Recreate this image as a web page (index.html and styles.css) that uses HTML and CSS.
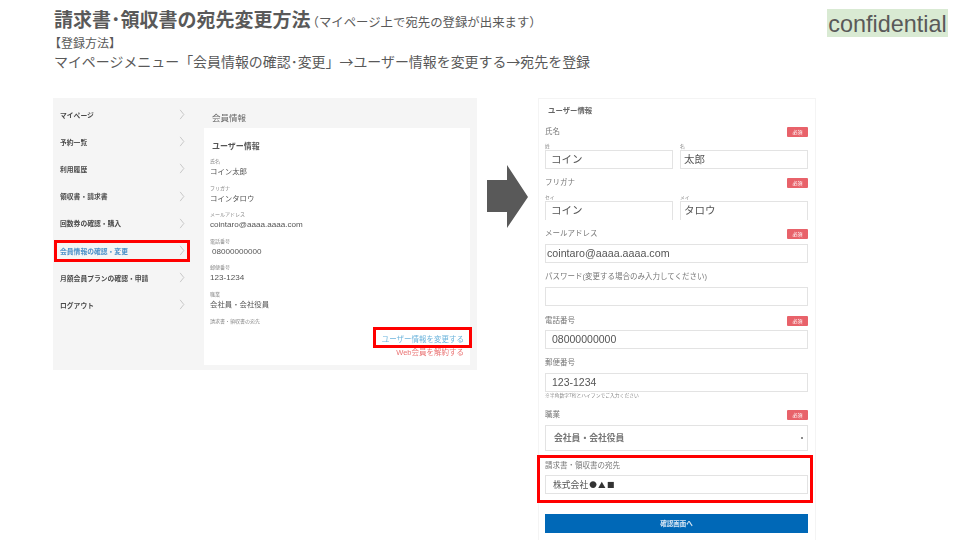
FILE: index.html
```html
<!DOCTYPE html>
<html lang="ja">
<head>
<meta charset="utf-8">
<title>請求書・領収書の宛先変更方法</title>
<link rel="stylesheet" href="styles.css">
</head>
<body>
<main class="slide">
  <header class="head">
    <h1 class="title">請求書･領収書の宛先変更方法<small class="sub">（マイページ上で宛先の登録が出来ます）</small></h1>
    <p class="line2">【登録方法】</p>
    <p class="line3">マイページメニュー「会員情報の確認･変更」→ユーザー情報を変更する→宛先を登録</p>
  </header>
  <div class="conf">confidential</div>

  <section class="shot-left">
    <div class="soft left-inner">
      <nav class="menu">
        <div class="mi"><span>マイページ</span><svg class="chev" viewBox="0 0 6 12"><path d="M1 1l4 5-4 5"/></svg></div>
        <div class="mi"><span>予約一覧</span><svg class="chev" viewBox="0 0 6 12"><path d="M1 1l4 5-4 5"/></svg></div>
        <div class="mi"><span>利用履歴</span><svg class="chev" viewBox="0 0 6 12"><path d="M1 1l4 5-4 5"/></svg></div>
        <div class="mi"><span>領収書・請求書</span><svg class="chev" viewBox="0 0 6 12"><path d="M1 1l4 5-4 5"/></svg></div>
        <div class="mi"><span>回数券の確認・購入</span><svg class="chev" viewBox="0 0 6 12"><path d="M1 1l4 5-4 5"/></svg></div>
        <div class="mi active"><span>会員情報の確認・変更</span><svg class="chev" viewBox="0 0 6 12"><path d="M1 1l4 5-4 5"/></svg></div>
        <div class="mi"><span>月額会員プランの確認・申請</span><svg class="chev" viewBox="0 0 6 12"><path d="M1 1l4 5-4 5"/></svg></div>
        <div class="mi"><span>ログアウト</span><svg class="chev" viewBox="0 0 6 12"><path d="M1 1l4 5-4 5"/></svg></div>
      </nav>
      <div class="content">
        <div class="content-title">会員情報</div>
        <div class="card">
          <div class="card-title">ユーザー情報</div>
          <dl class="info">
            <div class="row"><dt>氏名</dt><dd class="jp">コイン太郎</dd></div>
            <div class="row"><dt>フリガナ</dt><dd class="jp">コインタロウ</dd></div>
            <div class="row"><dt>メールアドレス</dt><dd>cointaro@aaaa.aaaa.com</dd></div>
            <div class="row"><dt>電話番号</dt><dd class="ind">08000000000</dd></div>
            <div class="row"><dt>郵便番号</dt><dd>123-1234</dd></div>
            <div class="row"><dt>職業</dt><dd class="jp">会社員・会社役員</dd></div>
            <div class="row"><dt>請求書・領収書の宛先</dt><dd></dd></div>
          </dl>
          <div class="links">
            <span class="l-blue">ユーザー情報を変更する</span>
            <span class="l-red">Web会員を解約する</span>
          </div>
        </div>
      </div>
    </div>
    <div class="mark mark-menu"></div>
    <div class="mark mark-link"></div>
  </section>

  <svg class="arrow" viewBox="0 0 42 64"><path d="M0 15H20V0L41 32 20 63V47H0Z"/></svg>

  <section class="shot-right">
    <div class="soft right-inner">
      <div class="form-title">ユーザー情報</div>

      <div class="fl g1"><span>氏名</span><b class="req">必須</b></div>
      <div class="two">
        <div class="col"><span class="mini">姓</span><div class="inp ind1">コイン</div></div>
        <div class="col"><span class="mini">名</span><div class="inp">太郎</div></div>
      </div>

      <div class="fl g2"><span>フリガナ</span><b class="req">必須</b></div>
      <div class="two">
        <div class="col"><span class="mini">セイ</span><div class="inp ind1 cut">コイン</div></div>
        <div class="col"><span class="mini">メイ</span><div class="inp cut">タロウ</div></div>
      </div>

      <div class="fl g3"><span>メールアドレス</span><b class="req">必須</b></div>
      <div class="inp mail">cointaro@aaaa.aaaa.com</div>

      <div class="fl g4"><span>パスワード(変更する場合のみ入力してください)</span></div>
      <div class="inp"></div>

      <div class="fl g5"><span>電話番号</span><b class="req">必須</b></div>
      <div class="inp ind2">08000000000</div>

      <div class="fl g6"><span>郵便番号</span></div>
      <div class="inp ind2">123-1234</div>
      <div class="note">※半角数字7桁とハイフンでご入力ください</div>

      <div class="fl g7"><span>職業</span><b class="req">必須</b></div>
      <div class="inp select"><span>会社員・会社役員</span><i class="dot"></i></div>

      <div class="fl g8"><span>請求書・領収書の宛先</span></div>
      <div class="inp dest">株式会社<span class="sym">●▲■</span></div>

      <div class="btn">確認画面へ</div>
    </div>
    <div class="mark mark-dest"></div>
  </section>
</main>
</body>
</html>
```
FILE: styles.css
```css
* { box-sizing: border-box; margin: 0; padding: 0; }
html, body { width: 960px; height: 540px; overflow: hidden; background: #fff; }
body { font-family: "Liberation Sans", "Noto Sans CJK JP", sans-serif; color: #595959; }

.slide { position: relative; width: 960px; height: 540px; overflow: hidden; }

.head { position: absolute; left: 54px; top: 9px; }
.title { font-size: 19px; line-height: 24px; font-weight: 700; color: #595959; white-space: nowrap; }
.sub { font-size: 12.4px; font-weight: 400; margin-left: -4px; }
.line2 { font-size: 12px; line-height: 18px; white-space: nowrap; margin-left: -5px; }
.line3 { font-family: "Noto Sans CJK JP", sans-serif; font-size: 13.95px; line-height: 17px; white-space: nowrap; }

.conf { position: absolute; left: 827px; top: 9px; width: 121px; height: 28px; background: #d9ead3; font-size: 23.4px; line-height: 30px; white-space: nowrap; color: #595959; text-align: center; }

.soft { filter: blur(0.45px); }

/* left screenshot */
.shot-left { position: absolute; left: 53px; top: 98px; width: 424px; height: 272px; }
.left-inner { display: flex; width: 100%; height: 100%; background: #f5f5f5; }
.menu { width: 151px; padding: 3px 0 0 7px; }
.mi { display: flex; align-items: center; justify-content: space-between; height: 27.2px; padding-right: 19px; font-size: 6.8px; font-weight: 700; color: #4a4a4a; }
.mi.active { color: #4a90c8; }
.chev { width: 6px; height: 11px; fill: none; stroke: #c4c4c4; stroke-width: 1; }

.content { flex: 1; display: flex; flex-direction: column; padding: 0 7px 5px 0; }
.content-title { height: 30px; padding: 14px 0 0 8px; font-size: 8.5px; line-height: 12px; color: #666; }
.card { flex: 1; background: #fff; padding: 14px 6px 0 6px; display: flex; flex-direction: column; }
.card-title { height: 16px; padding-left: 2px; font-size: 8px; line-height: 10px; font-weight: 700; color: #555; }
.info { display: block; }
.row { height: 26.6px; }
.row dt { font-size: 5px; line-height: 6px; color: #888; }
.row dd { font-size: 8.1px; line-height: 15px; color: #555; white-space: nowrap; }
.row dd.jp { font-size: 7.4px; }
.row dd.ind { padding-left: 2px; }
.links { display: flex; flex-direction: column; align-items: flex-end; margin-top: -11px; font-size: 7.5px; line-height: 13px; }
.l-blue { color: #6db4dc; }
.l-red { color: #ea7474; }

.mark { position: absolute; border: 3px solid #f00; }
.mark-menu { left: 1px; top: 142px; width: 136px; height: 22px; }
.mark-link { left: 320px; top: 229px; width: 99px; height: 21px; }
.mark-dest { left: -1px; top: 357px; width: 276px; height: 48px; }

.arrow { position: absolute; left: 487px; top: 165px; width: 42px; height: 64px; fill: #595959; }

/* right screenshot */
.shot-right { position: absolute; left: 538px; top: 98px; width: 278px; height: 442px; }
.right-inner { width: 100%; height: 100%; background: #fff; border: 1px solid #f4f4f4; border-bottom: 0; padding: 0 7px 0 6px; }
.form-title { height: 23px; padding: 6px 0 0 3px; font-size: 7.4px; line-height: 11px; font-weight: 700; color: #666; }
.fl { display: flex; justify-content: space-between; align-items: center; height: 11px; font-size: 7.5px; line-height: 11px; color: #777; }
.g1 { margin-top: 4px; margin-bottom: 6px; }
.g2 { margin-top: 8px; margin-bottom: 6px; }
.g3 { margin-top: 8px; margin-bottom: 5px; }
.g4 { margin-top: 8px; margin-bottom: 5px; }
.g5 { margin-top: 9px; margin-bottom: 4px; }
.g6 { margin-top: 8px; margin-bottom: 5px; }
.g7 { margin-top: 9px; margin-bottom: 5px; }
.g8 { margin-top: 9px; margin-bottom: 4px; }
.req { width: 21px; height: 10px; background: #e8626a; color: #fff; border-radius: 1px; font-size: 5px; line-height: 10px; font-weight: 400; text-align: center; }
.two { display: grid; grid-template-columns: 128px 128px; gap: 7px; }
.col { display: block; }
.mini { display: block; height: 7px; font-size: 4.8px; line-height: 7px; color: #888; }
.inp { height: 19px; border: 1px solid #e3e3e3; font-size: 10.5px; line-height: 17px; color: #555; padding-left: 3px; white-space: nowrap; }
.ind1 { padding-left: 5px; }
.ind2 { padding-left: 6px; }
.mail { padding-left: 1px; font-size: 10.7px; }
.cut { border-bottom: 0; }
.note { height: 8px; font-size: 4.8px; line-height: 8px; color: #888; }
.select { height: 26px; display: flex; align-items: center; justify-content: space-between; padding: 0 4px 0 8px; font-size: 8.8px; font-weight: 700; color: #777; }
.dot { width: 2px; height: 2px; background: #666; border-radius: 50%; }
.dest { padding-left: 7px; font-family: "Noto Sans CJK JP", sans-serif; font-size: 8.8px; line-height: 17px; }
.sym { font-size: 7.6px; letter-spacing: 1.3px; margin-left: 1px; color: #333; }
.btn { margin-top: 20px; height: 19px; background: #0068b7; color: #dce9f5; font-size: 6.5px; line-height: 19px; font-weight: 700; text-align: center; }
```
